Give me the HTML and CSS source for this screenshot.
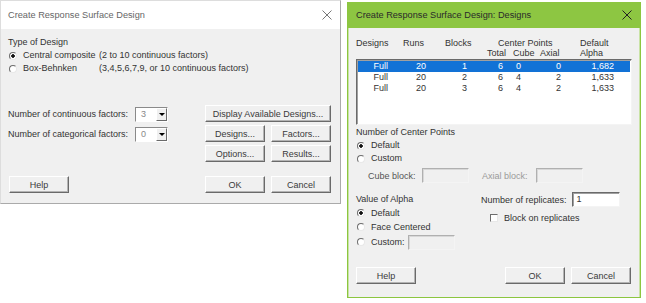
FILE: index.html
```html
<!DOCTYPE html>
<html lang="en">
<head>
    <meta charset="UTF-8">
    <title>Create Response Surface Design</title>
    <link rel="stylesheet" href="styles.css">
</head>
<body>

<div class="desk">
    <!-- main dialog -->
    <div class="dlg main">
        <div class="titlebar">
            <span class="title">Create Response Surface Design</span>
            <svg class="close" width="10" height="10" viewBox="0 0 10 10"><path d="M0.5 0.5L9.5 9.5M9.5 0.5L0.5 9.5" stroke="#777" stroke-width="1"/></svg>
        </div>
        <div class="body">
            <div class="line">Type of Design</div>
            <div class="line">
                <span class="radio on"></span><span class="opt1">Central composite</span><span>(2 to 10 continuous factors)</span>
            </div>
            <div class="line">
                <span class="radio"></span><span class="opt1">Box-Behnken</span><span>(3,4,5,6,7,9, or 10 continuous factors)</span>
            </div>

            <div class="lower">
                <div class="factors">
                    <div class="frow">
                        <span class="flabel">Number of continuous factors:</span>
                        <span class="combo"><span class="val">3</span><span class="arrow"></span></span>
                    </div>
                    <div class="frow">
                        <span class="flabel">Number of categorical factors:</span>
                        <span class="combo"><span class="val">0</span><span class="arrow"></span></span>
                    </div>
                </div>
                <div class="btngrid">
                    <span class="btn wide">Display Available Designs...</span>
                    <span class="btn">Designs...</span>
                    <span class="btn">Factors...</span>
                    <span class="btn">Options...</span>
                    <span class="btn">Results...</span>
                </div>
            </div>

            <div class="foot">
                <span class="btn">Help</span>
                <span class="pair">
                    <span class="btn">OK</span>
                    <span class="btn">Cancel</span>
                </span>
            </div>
        </div>
    </div>

    <!-- designs sub dialog -->
    <div class="dlg sub">
        <div class="titlebar">
            <span class="title">Create Response Surface Design: Designs</span>
            <svg class="close" width="10" height="10" viewBox="0 0 10 10"><path d="M0.5 0.5L9.5 9.5M9.5 0.5L0.5 9.5" stroke="#222" stroke-width="1"/></svg>
        </div>
        <div class="body">
            <div class="head">
                <div class="hrow">
                    <span class="h1">Designs</span>
                    <span class="h2">Runs</span>
                    <span class="h3">Blocks</span>
                    <span class="h4">Center Points</span>
                    <span class="h5">Default</span>
                </div>
                <div class="hrow">
                    <span class="h6">Total</span>
                    <span class="h7">Cube</span>
                    <span class="h8">Axial</span>
                    <span class="h9">Alpha</span>
                </div>
            </div>
            <div class="list">
                <div class="row sel">
                    <span class="c1">Full</span><span class="c2">20</span><span class="c3">1</span><span class="c4">6</span><span class="c5">0</span><span class="c6">0</span><span class="c7">1,682</span>
                </div>
                <div class="row">
                    <span class="c1">Full</span><span class="c2">20</span><span class="c3">2</span><span class="c4">6</span><span class="c5">4</span><span class="c6">2</span><span class="c7">1,633</span>
                </div>
                <div class="row">
                    <span class="c1">Full</span><span class="c2">20</span><span class="c3">3</span><span class="c4">6</span><span class="c5">4</span><span class="c6">2</span><span class="c7">1,633</span>
                </div>
            </div>

            <div class="line">Number of Center Points</div>
            <div class="line"><span class="radio on"></span>Default</div>
            <div class="line"><span class="radio"></span>Custom</div>
            <div class="blockrow">
                <span class="lbl cube">Cube block:</span>
                <span class="edit off"></span>
                <span class="lbl axial">Axial block:</span>
                <span class="edit off"></span>
            </div>

            <div class="split">
                <div class="alpha">
                    <div class="aline">Value of Alpha</div>
                    <div class="aline"><span class="radio on"></span>Default</div>
                    <div class="aline"><span class="radio"></span>Face Centered</div>
                    <div class="aline custom"><span class="radio"></span>Custom:<span class="edit off"></span></div>
                </div>
                <div class="reps">
                    <div class="reprow">Number of replicates:<span class="edit">1</span></div>
                    <div class="chkrow"><span class="check"></span>Block on replicates</div>
                </div>
            </div>

            <div class="foot">
                <span class="btn">Help</span>
                <span class="pair">
                    <span class="btn">OK</span>
                    <span class="btn">Cancel</span>
                </span>
            </div>
        </div>
    </div>
</div>

</body>
</html>
```

FILE: styles.css
```css
* {
    padding: 0;
    margin: 0;
    box-sizing: border-box;
}
body {
    background: #fff;
    font-family: "Liberation Sans", Arial, sans-serif;
    font-size: 9px;
    color: #333;
}
.desk {
    display: flex;
    align-items: flex-start;
    gap: 6px;
}

/* dialog frames */
.dlg {
    background: #f0f0f0;
    display: flex;
    flex-direction: column;
}
.main {
    width: 341px;
    height: 204px;
    border: 1px solid #aaa;
    border-left-color: #ddd;
    border-top-color: #ddd;
}
.sub {
    width: 294px;
    height: 296px;
    margin-top: 2px;
    border: 1px solid #8cc63f;
    border-top: none;
    box-shadow: inset 1px 0 #c9e3a6, inset -1px 0 #c9e3a6;
}
.titlebar {
    display: flex;
    justify-content: space-between;
    align-items: center;
    padding: 0 8px 0 7px;
    font-size: 9.2px;
}
.main .titlebar {
    height: 28px;
    background: #fff;
    color: #666;
}
.sub .titlebar {
    height: 26px;
    background: #8dc642;
    color: #2a2a2a;
    padding-left: 8px;
}

.main .body {
    padding: 7px 9px 0 7px;
}
.sub .body {
    padding: 10px 8px 0 8px;
}

.line {
    height: 13px;
    line-height: 13px;
    display: flex;
    align-items: center;
}
.opt1 {
    width: 76px;
}

/* classic radio / check */
.radio {
    width: 8px;
    height: 8px;
    border-radius: 50%;
    border: 1px solid;
    border-color: #6d6d6d #e8e8e8 #e8e8e8 #6d6d6d;
    background: #fff;
    margin: 0 6px 0 1px;
    flex: none;
}
.radio.on {
    background: radial-gradient(circle, #111 0 1.5px, #fff 2px);
}
.check {
    width: 8px;
    height: 8px;
    border: 1px solid;
    border-color: #6d6d6d #e8e8e8 #e8e8e8 #6d6d6d;
    background: #fff;
    margin-right: 6px;
}

/* buttons */
.btn {
    display: inline-flex;
    align-items: center;
    justify-content: center;
    height: 17px;
    width: 60px;
    background: #f0f0f0;
    border: 1px solid;
    border-color: #fff #6a6a6a #6a6a6a #fff;
    box-shadow: inset -1px -1px #b4b4b4;
    color: #3a3a3a;
}

/* lower part of main */
.lower {
    display: flex;
    justify-content: space-between;
    margin-top: 30px;
}
.factors {
    display: flex;
    flex-direction: column;
    gap: 4px;
    padding-top: 1px;
}
.frow {
    height: 16px;
    display: flex;
    align-items: center;
}
.flabel {
    width: 127px;
}
.combo {
    width: 33px;
    height: 15px;
    border: 1px solid;
    border-color: #8a8a8a #fff #fff #8a8a8a;
    background: #fff;
    display: flex;
    justify-content: space-between;
    color: #888;
}
.combo .val {
    padding-left: 5px;
    line-height: 13px;
}
.combo .arrow {
    width: 11px;
    background: #f0f0f0;
    border: 1px solid;
    border-color: #fff #6a6a6a #6a6a6a #fff;
    position: relative;
}
.combo .arrow::after {
    content: "";
    position: absolute;
    left: 2px;
    top: 4px;
    border: 3px solid transparent;
    border-top: 3px solid #000;
}
.btngrid {
    display: grid;
    grid-template-columns: 60px 60px;
    column-gap: 6px;
    row-gap: 3px;
    width: 126px;
}
.btngrid .btn {
    width: auto;
}
.btngrid .wide {
    grid-column: 1 / 3;
}
.foot {
    display: flex;
    justify-content: space-between;
}
.main .foot {
    margin-top: 14px;
    padding-left: 1px;
}
.pair {
    display: flex;
    gap: 6px;
}

/* designs table */
.head {
    height: 21px;
}
.hrow {
    height: 10px;
    line-height: 10px;
    position: relative;
}
.hrow span {
    position: absolute;
    top: 0;
}
.h1 { left: 0; }
.h2 { left: 47px; }
.h3 { left: 89px; }
.h4 { left: 142px; }
.h5 { left: 224px; }
.h6 { left: 131px; }
.h7 { left: 157px; }
.h8 { left: 184px; }
.h9 { left: 224px; }
.list {
    height: 66px;
    background: #fff;
    border: 1px solid;
    border-color: #6a6a6a #f4f4f4 #f4f4f4 #6a6a6a;
    box-shadow: inset 1px 1px #a0a0a0;
    padding: 1px 1px 0 1px;
}
.row {
    display: flex;
    height: 11px;
    line-height: 11px;
    color: #333;
}
.row.sel {
    background: #1272d6;
    color: #fff;
}
.row span {
    text-align: right;
    flex: none;
}
.c1 { width: 30px; }
.c2 { width: 38px; }
.c3 { width: 41px; }
.c4 { width: 36px; }
.c5 { width: 18px; }
.c6 { width: 40px; }
.c7 { width: 53px; }

.sub .list + .line {
    margin-top: 1px;
}
.blockrow {
    display: flex;
    align-items: center;
    height: 15px;
    margin-top: 3px;
    padding-left: 12px;
}
.lbl {
    width: 54px;
}
.cube {
    color: #555;
}
.axial {
    color: #9a9a9a;
    margin-left: 13px;
}
.edit {
    display: inline-block;
    width: 47px;
    height: 15px;
    background: #fff;
    border: 1px solid;
    border-color: #6a6a6a #f4f4f4 #f4f4f4 #6a6a6a;
    box-shadow: inset 1px 1px #a0a0a0;
    padding-left: 4px;
    line-height: 13px;
}
.edit.off {
    background: #f0f0f0;
    border-color: #b0b0b0 #f4f4f4 #f4f4f4 #b0b0b0;
    box-shadow: inset 1px 1px #d8d8d8;
}

.split {
    display: flex;
    margin-top: 9px;
}
.alpha {
    width: 125px;
}
.aline {
    height: 14px;
    display: flex;
    align-items: center;
}
.aline.custom {
    height: 16px;
}
.aline.custom .edit {
    margin-left: 3px;
}
.reps {
    display: flex;
    flex-direction: column;
}
.reprow {
    display: flex;
    align-items: center;
    height: 15px;
}
.reprow .edit {
    margin-left: 5px;
    width: 48px;
}
.chkrow {
    display: flex;
    align-items: center;
    margin: 6px 0 0 9px;
}
.sub .foot {
    margin-top: 17px;
    padding-right: 1px;
}
```
